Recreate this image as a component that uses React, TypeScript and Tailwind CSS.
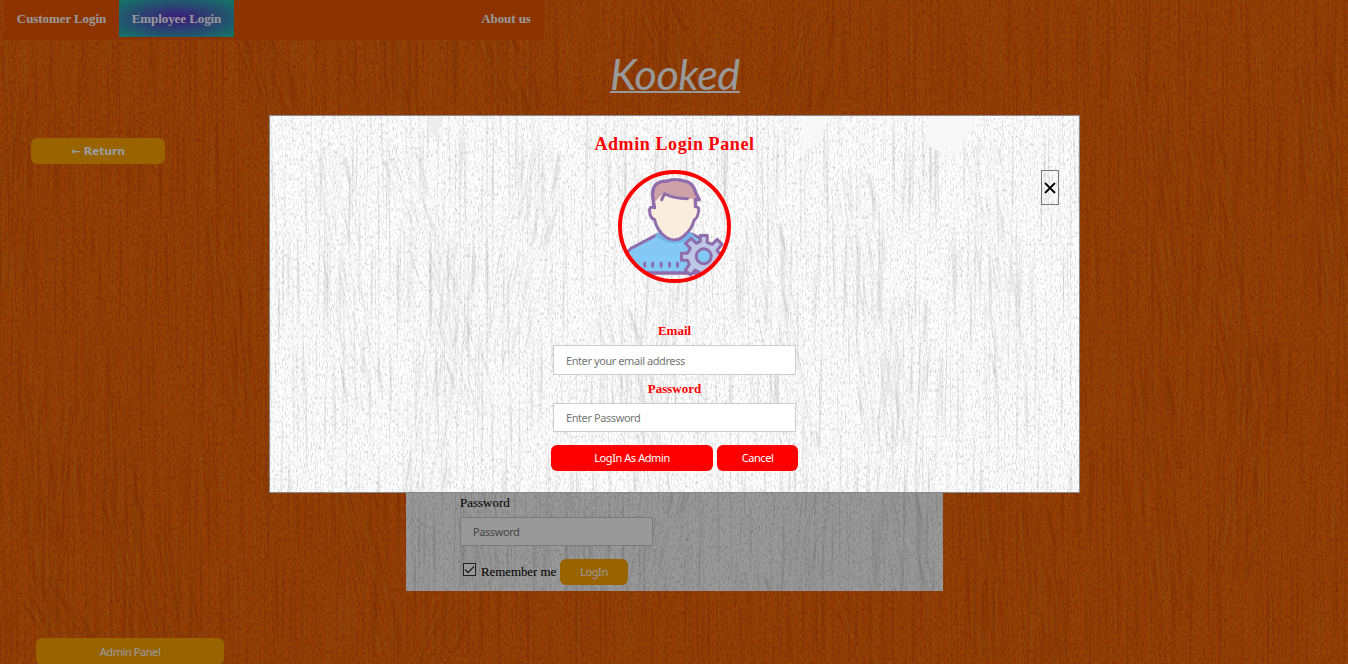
import React from "react";

type Patch = [number, number, number, number, number];

const strokes: Patch[] = [
  [15, 380, 34, 240, -4], [62, 392, 28, 190, 8], [100, 388, 36, 210, -3],
  [95, 487, 40, 230, -14], [10, 590, 50, 190, -32], [150, 522, 32, 170, -10],
  [225, 20, 50, 200, -18], [465, 20, 45, 150, -20], [510, 80, 34, 120, -5],
  [630, 0, 45, 110, -22], [365, 10, 40, 140, -8], [800, 0, 50, 120, 12],
  [1125, 70, 38, 260, -8], [1180, 130, 42, 280, -10], [1130, 370, 44, 230, -5],
  [960, 460, 40, 190, -3], [1010, 500, 44, 180, -6], [1240, 330, 45, 240, 7],
  [1290, 60, 40, 240, -7], [830, 600, 36, 120, -20], [440, 590, 40, 110, 24],
  [330, 470, 40, 180, -12], [10, 80, 35, 200, 5], [200, 210, 38, 190, -7],
];

const panelStrokes: Patch[] = [
  [105, 30, 38, 280, -18], [170, 120, 44, 260, 8], [35, 30, 40, 260, -9],
  [255, 20, 48, 220, 12], [470, 100, 40, 240, -10], [560, 50, 45, 280, -7],
  [620, 170, 46, 210, 5], [690, 20, 38, 240, -8], [390, 80, 38, 220, 7],
  [320, 190, 44, 190, -14],
];

function Grain({ id, wood, patches }: { id: string; wood?: boolean; patches: Patch[] }) {
  const light = wood ? "0 0 0 0 .92  0 0 0 0 .54  0 0 0 0 .13" : "0 0 0 0 1  0 0 0 0 1  0 0 0 0 1";
  const dark = wood ? "0 0 0 0 .78  0 0 0 0 .25  0 0 0 0 0" : "0 0 0 0 .6  0 0 0 0 .6  0 0 0 0 .6";
  const fineDark = wood ? "0 3 0 0 -1.35" : "0 1.8 0 0 -.86";
  const longDark = wood ? "0 2.6 0 0 -1.25" : "0 1.4 0 0 -.74";
  const brushDark = wood ? "0 3.2 0 0 -1.55" : "0 2.2 0 0 -1.1";
  return (
    <svg className="absolute inset-0 h-full w-full" aria-hidden="true">
      <defs>
        <filter id={`${id}-fine`} x="0" y="0" width="100%" height="100%" colorInterpolationFilters="sRGB">
          <feTurbulence type="fractalNoise" baseFrequency=".73 .26" numOctaves="2" seed="8" result="n" />
          <feColorMatrix in="n" values={`${light} 2.2 0 0 0 -1.05`} result="l" />
          <feColorMatrix in="n" values={`${dark} ${fineDark}`} result="d" />
          <feMerge><feMergeNode in="l" /><feMergeNode in="d" /></feMerge>
        </filter>
        <filter id={`${id}-long`} x="0" y="0" width="100%" height="100%" colorInterpolationFilters="sRGB">
          <feTurbulence type="fractalNoise" baseFrequency=".37 .009" numOctaves="2" seed="17" result="n" />
          <feColorMatrix in="n" values={`${light} 2.4 0 0 0 -1.25`} result="l" />
          <feColorMatrix in="n" values={`${dark} ${longDark}`} result="d" />
          <feMerge><feMergeNode in="l" /><feMergeNode in="d" /></feMerge>
        </filter>
        <filter id={`${id}-brush`} x="0" y="0" width="100%" height="100%" colorInterpolationFilters="sRGB">
          <feTurbulence type="fractalNoise" baseFrequency=".4 .018" numOctaves="2" seed="4" result="n" />
          <feColorMatrix in="n" values={`${light} 2.4 0 0 0 -1.1`} result="l" />
          <feColorMatrix in="n" values={`${dark} ${brushDark}`} result="d" />
          <feMerge result="m"><feMergeNode in="l" /><feMergeNode in="d" /></feMerge>
          <feComposite in="m" in2="SourceAlpha" operator="in" />
        </filter>
      </defs>
      <rect width="100%" height="100%" opacity={wood ? 0.55 : 0.8} filter={`url(#${id}-long)`} />
      <rect width="100%" height="100%" opacity={wood ? 0.6 : 0.65} filter={`url(#${id}-fine)`} />
      {patches.map(([x, y, w, h, angle], i) => (
        <g key={i} transform={`translate(${x} ${y}) rotate(${angle})`} opacity={wood ? 0.45 : 0.4}>
          <path d={`M0 ${h}V${w / 2}Q${w / 2} ${-w / 3} ${w} ${w / 2}V${h}Q${w / 2} ${h + 22} 0 ${h}`} filter={`url(#${id}-brush)`} />
        </g>
      ))}
      {!wood && (
        <g>
          <path d="M158 0H172L167 24L160 16Z" fill="#ededed" />
          <path d="M533 0H558Q554 26 529 39Q534 20 533 0Z" fill="#f8f8f8" />
          <path d="M660 0H704Q696 32 678 36Q659 36 656 23Z" fill="#f8f8f8" />
        </g>
      )}
    </svg>
  );
}

function Avatar() {
  return (
    <svg width="113" height="113" viewBox="0 0 114 114" className="mt-[15px]" role="img" aria-label="Administrator">
      <defs><clipPath id="face"><circle cx="57" cy="57" r="54" /></clipPath></defs>
      <g clipPath="url(#face)" stroke="#8f6cac" strokeWidth="3" strokeLinejoin="round" strokeLinecap="round">
        <path d="M8 113V86Q10 80 17 77L40 65L57 62L76 65L97 77L102 104H8Z" fill="#84c9f6" />
        <path d="M37 66Q57 82 77 66L71 61H43Z" fill="#72b5e7" stroke="none" />
        <path d="M36 37L35 26Q34 11 50 11Q58 8 70 12Q76 14 78 22L82 30H78V37Z" fill="#cda1a7" />
        <path d="M36 33L44 25L47 25Q55 29 64 29H76L77 38Q82 36 81 42Q80 49 76 50Q73 60 69 64Q57 77 44 64Q38 58 36 50Q31 48 32 39Q33 37 36 38Z" fill="#faeddd" stroke="none" />
        <path d="M37 38L35 26Q34 11 50 11Q58 8 70 12Q76 14 78 22L82 30H78L78 37Q83 37 81 43Q80 49 77 50Q74 60 69 64Q57 77 44 64Q38 57 37 50Q32 48 32 42Q31 36 37 38" fill="none" />
        <path d="M44 30L47 24Q56 29 70 29" fill="none" />
        <path d="M8 104H103" />
        <path d="M27 94v3M35 94v3M43.5 94v3M52 94v3M60 94v3" />
        <path d="M83 66H90V73L95 75L100 70L105 75L100 81L103 85H110V91H103L100 96L105 101L100 106L94 101L90 104V111H83V104L78 101L73 106L68 101L72 95L70 91H64V84H70L73 79L68 74L74 69L79 74L83 72Z" fill="#bcc7e5" />
        <circle cx="86.5" cy="87" r="7.5" fill="#84c9f6" />
      </g>
      <circle cx="57" cy="57" r="55" fill="none" stroke="#f00" strokeWidth="4" />
    </svg>
  );
}

const sans = "font-['Noto_Sans',sans-serif] text-[11px] leading-[14px] tracking-[-0.42px]";
const field = `${sans} block border border-[#ccc] bg-white px-3 text-black outline-none placeholder:text-[#757575] placeholder:opacity-100`;
const orange = `${sans} rounded-[6px] bg-[#ffa500] text-white`;
const red = `${sans} h-[26px] rounded-[6px] bg-[#f00] text-white`;

export default function App() {
  return (
    <div className="relative h-[664px] w-[1348px] overflow-hidden bg-[#f96a08] font-['Liberation_Serif',serif] text-[13px]">
      <Grain id="wood" wood patches={strokes} />
      <div className="relative flex h-full flex-col">
        <nav className="ml-1 flex h-10 w-[540px] shrink-0 items-start bg-[#eb5500] font-bold tracking-[-0.08px] text-white">
          <a className="flex h-[37px] w-[115px] items-center justify-center whitespace-nowrap">Customer Login</a>
          <a className="flex h-[37px] w-[115px] items-center justify-center whitespace-nowrap bg-[radial-gradient(#6628d0,#20c6aa)]">Employee Login</a>
          <a className="ml-auto flex h-[37px] w-[76px] items-center justify-center">About us</a>
        </nav>
        <h1 className="ml-[610px] flex h-[98px] w-[150px] items-start whitespace-nowrap font-['Lato',sans-serif] text-[43px] font-normal italic leading-[67px] tracking-[-0.4px] text-white underline decoration-2 underline-offset-[1px]">Kooked</h1>
        <button className="ml-[31px] h-[26px] w-[134px] shrink-0 rounded-[6px] bg-[#ffa500] font-['DejaVu_Sans',sans-serif] text-[11px] font-bold leading-none tracking-[-0.2px] text-white">← Return</button>
        <form className="relative ml-[406px] mt-[220px] h-[207px] w-[537px] shrink-0 overflow-hidden bg-white">
          <Grain id="form" patches={panelStrokes} />
          <div className="relative ml-[54px] pt-[111px]">
            <label className="block leading-4">Password</label>
            <input className={`${field} mt-[6px] h-[29px] w-[193px]`} placeholder="Password" />
            <div className="mt-[13px] flex items-center">
              <span className="mb-[5px] ml-[3px] flex h-[13px] w-[13px] items-center justify-center border border-[#333] bg-white">
                <svg width="11" height="11" viewBox="0 0 11 11"><path d="M1 5.5L4 8.5L10 2.5" fill="none" stroke="#333" strokeWidth="1.3" /></svg>
              </span>
              <span className="ml-[5px] w-[79px] whitespace-nowrap tracking-[-0.1px]">Remember me</span>
              <button type="button" className={`${orange} h-[26px] w-[68px]`}>LogIn</button>
            </div>
          </div>
        </form>
        <button className={`${orange} absolute left-9 top-[638px] h-[27px] w-[188px]`}>Admin Panel</button>
      </div>
      <div className="absolute inset-0 bg-black/40 pl-[269px] pt-[115px]">
        <section className="relative h-[378px] w-[811px] overflow-hidden border border-[#888] bg-[#fefefe]">
          <Grain id="modal" patches={panelStrokes} />
          <div className="relative flex flex-col items-center text-[#f00]">
            <h2 className="mt-[17px] whitespace-nowrap text-[18px] font-bold leading-[22px] tracking-[0.6px]">Admin Login Panel</h2>
            <Avatar />
            <label className="mt-10 font-bold leading-4">Email</label>
            <input className={`${field} mt-[6px] h-[30px] w-[243px]`} placeholder="Enter your email address" />
            <label className="mt-[6px] font-bold leading-4">Password</label>
            <input className={`${field} mt-[6px] h-[29px] w-[243px]`} placeholder="Enter Password" />
            <div className="mt-[13px] flex gap-1">
              <button className={`${red} w-[162px]`}>LogIn As Admin</button>
              <button className={`${red} w-[81px]`}>Cancel</button>
            </div>
          </div>
          <button aria-label="Close" className="absolute left-[771px] top-[54px] flex h-[35px] w-[18px] items-center justify-center border border-[#777] text-black">
            <svg width="12" height="12" viewBox="0 0 12 12"><path d="M1 1L11 11M11 1L1 11" stroke="currentColor" strokeWidth="1.8" /></svg>
          </button>
        </section>
      </div>
    </div>
  );
}
